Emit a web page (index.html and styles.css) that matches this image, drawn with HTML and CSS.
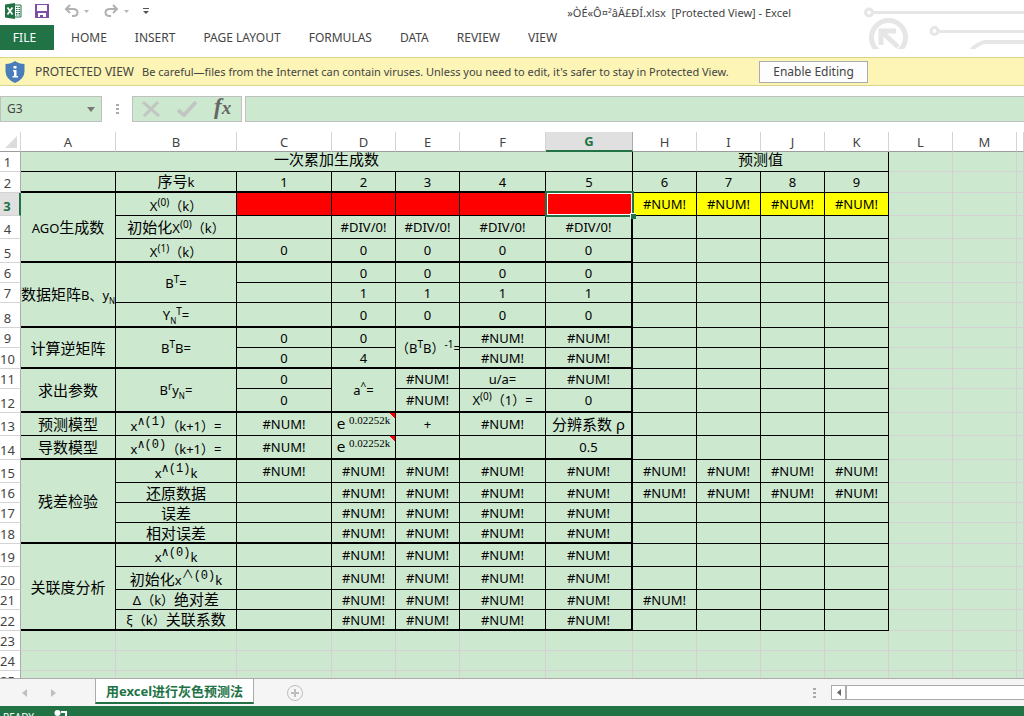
FILE: index.html
```html
<!DOCTYPE html>
<html lang="zh-CN">
<head>
<meta charset="utf-8">
<title>Excel</title>
<link rel="stylesheet" href="styles.css">
</head>
<body>
<div class="app">
  <header class="top">
    <svg class="circuit" width="160" height="49" viewBox="0 0 160 49" fill="none" stroke="#e6e6e6" stroke-width="3" aria-hidden="true">
      <circle cx="5" cy="12.500" r="3.500"/><path d="M9 12.500H160"/>
      <circle cx="70.500" cy="31" r="3.500"/><path d="M75 31.500H160"/>
      <path d="M107 50Q116 42 122 42H160" stroke-width="4"/>
      <circle cx="24.500" cy="37.500" r="17" stroke-width="5"/>
      <path d="M17 45V31H32M18 32L34 47" stroke-width="5"/>
    </svg>
    <div class="titlebar">
      <div class="quick">
        <svg width="18" height="16" viewBox="0 0 18 16"><path d="M9 2h7v12H9z" fill="#fff" stroke="#217346"/><path d="M11 4.500h4M11 6.500h4M11 8.500h4M11 10.500h4M11 12h4" stroke="#217346" stroke-dasharray="1.500 1"/><path d="M0 1.500L10 0v16L0 14.500z" fill="#217346"/><path d="M2.500 4.500l5 7M7.500 4.500l-5 7" stroke="#fff" stroke-width="1.700"/></svg>
        <button aria-label="Save" class="save"><svg width="14" height="14" viewBox="0 0 14 14"><path d="M0 0h14v14H0z" fill="#7f4fa8"/><path d="M2 1h10v6H2zM3 9h8v4H8v-2H5v2H3z" fill="#fff"/></svg></button>
        <button aria-label="Undo" class="undo"><svg width="15" height="14" viewBox="0 0 15 14" fill="none" stroke="#b1b1b1" stroke-width="2"><path d="M6 1L2 5l4 4M2 5h7c6 0 6 7 0 7H8"/></svg><svg width="5" height="3" viewBox="0 0 5 3"><path d="M0 0h5L2.500 3z" fill="#b5b5b5"/></svg></button>
        <button aria-label="Redo" class="redo"><svg width="15" height="14" viewBox="0 0 15 14" fill="none" stroke="#b1b1b1" stroke-width="2"><path d="M9 1l4 4-4 4M13 5H6c-6 0-6 7 0 7h1"/></svg><svg width="5" height="3" viewBox="0 0 5 3"><path d="M0 0h5L2.500 3z" fill="#b5b5b5"/></svg></button>
        <button aria-label="Customize" class="custom"><svg width="6" height="7" viewBox="0 0 6 7"><path d="M0 0h6v1H0zM0 3h6L3 6z" fill="#555"/></svg></button>
      </div>
      <div class="title">»ÒÉ«Ô¤²âÄ£ÐÍ.xlsx&nbsp; [Protected View] - Excel</div>
    </div>
    <nav class="tabs">
      <button class="file">FILE</button><button>HOME</button><button>INSERT</button><button>PAGE LAYOUT</button><button>FORMULAS</button><button>DATA</button><button>REVIEW</button><button>VIEW</button>
    </nav>
  </header>
  <div class="notice">
    <svg width="20" height="22" viewBox="0 0 20 22"><path d="M10 0q4 3 9.500 3v7q0 8-9.500 12Q.5 18 .5 10V3Q6 3 10 0z" fill="#4a7ebb"/><path d="M8.500 5h3v2.500h-3zM8 9h3.500v6H13v1.500H7.500V15H9v-4.500H8z" fill="#fff"/></svg>
    <span class="head">PROTECTED VIEW</span>
    <span class="msg">Be careful—files from the Internet can contain viruses. Unless you need to edit, it's safer to stay in Protected View.</span>
    <button>Enable Editing</button>
  </div>
  <div class="formula">
    <div class="namebox"><input aria-label="Name box" value="G3"><svg width="8" height="5" viewBox="0 0 8 5"><path d="M0 0h8L4 5z" fill="#777"/></svg></div>
    <span class="dots"></span>
    <div class="fxbox">
      <button aria-label="Cancel"><svg width="18" height="16" viewBox="0 0 18 16"><path d="M1 1l16 14M16 1L2 15" stroke="#c2c6c2" stroke-width="3"/></svg></button>
      <button aria-label="Enter"><svg width="20" height="16" viewBox="0 0 20 16"><path d="M1 9l6 5L19 1" fill="none" stroke="#c2c6c2" stroke-width="4"/></svg></button>
      <button aria-label="Insert function" class="fx">f<small>x</small></button>
    </div>
    <input class="bar" aria-label="Formula bar">
  </div>
  <main class="sheet">
  <table>
    <colgroup><col class="w-rh"><col class="w-a"><col class="w-b"><col class="w-a"><col class="w-d"><col class="w-d"><col class="w-f"><col class="w-g"><col class="w-d"><col class="w-d"><col class="w-d"><col class="w-d"><col class="w-d"><col class="w-d"><col></colgroup>
    <thead><tr class="cols"><th class="corner"><svg width="12" height="12" viewBox="0 0 12 12"><path d="M12 0v12H0z" fill="#dcdcdc"/></svg></th><th>A</th><th>B</th><th>C</th><th>D</th><th>E</th><th>F</th><th class="on">G</th><th>H</th><th>I</th><th>J</th><th>K</th><th>L</th><th>M</th><th></th></tr></thead>
    <tbody>
    <tr class="r20"><th>1</th><td colspan="7" class="zh tight">一次累加生成数</td><td colspan="4" class="zh tight">预测值</td><td class="o"></td><td class="o"></td><td class="o"></td></tr>
    <tr class="r21 t"><th>2</th><td></td><td><span class="zh">序号</span>k</td><td>1</td><td>2</td><td>3</td><td>4</td><td>5</td><td class="h">6</td><td class="h">7</td><td class="h">8</td><td class="h">9</td><td class="o"></td><td class="o"></td><td class="o"></td></tr>
    <tr class="r23"><th class="on">3</th><td rowspan="3" class="tb">AGO<span class="zh">生成数</span></td><td class="low">X<sup>(0)</sup>（k）</td><td class="red"></td><td class="red"></td><td class="red"></td><td class="red"></td><td class="red active"><div class="selection"><i></i></div></td><td class="yel">#NUM!</td><td class="yel">#NUM!</td><td class="yel">#NUM!</td><td class="yel">#NUM!</td><td class="o"></td><td class="o"></td><td class="o"></td></tr>
    <tr class="r23"><th>4</th><td><span class="zh">初始化</span>X<sup>(0)</sup>（k）</td><td></td><td>#DIV/0!</td><td>#DIV/0!</td><td>#DIV/0!</td><td class="g">#DIV/0!</td><td></td><td></td><td></td><td></td><td class="o"></td><td class="o"></td><td class="o"></td></tr>
    <tr class="r24 t"><th>5</th><td class="low">X<sup>(1)</sup>（k）</td><td>0</td><td>0</td><td>0</td><td>0</td><td class="g">0</td><td class="h"></td><td class="h"></td><td class="h"></td><td class="h"></td><td class="o"></td><td class="o"></td><td class="o"></td></tr>
    <tr class="r20"><th>6</th><td rowspan="3" class="tb clip"><span class="zh">数据矩阵</span>B、y<sub>N</sub></td><td rowspan="2">B<sup>T</sup>=</td><td></td><td>0</td><td>0</td><td>0</td><td class="g">0</td><td></td><td></td><td></td><td></td><td class="o"></td><td class="o"></td><td class="o"></td></tr>
    <tr class="r20"><th>7</th><td></td><td>1</td><td>1</td><td>1</td><td class="g">1</td><td></td><td></td><td></td><td></td><td class="o"></td><td class="o"></td><td class="o"></td></tr>
    <tr class="r25 t"><th>8</th><td>Y<sub>N</sub><sup>T</sup>=</td><td></td><td>0</td><td>0</td><td>0</td><td class="g">0</td><td class="h"></td><td class="h"></td><td class="h"></td><td class="h"></td><td class="o"></td><td class="o"></td><td class="o"></td></tr>
    <tr class="r20"><th>9</th><td rowspan="2" class="tb zh">计算逆矩阵</td><td rowspan="2" class="tb">B<sup>T</sup>B=</td><td>0</td><td>0</td><td rowspan="2" class="tb clip">（B<sup>T</sup>B）<sup>-1</sup>=</td><td>#NUM!</td><td class="g">#NUM!</td><td></td><td></td><td></td><td></td><td class="o"></td><td class="o"></td><td class="o"></td></tr>
    <tr class="r21 t"><th>10</th><td>0</td><td>4</td><td>#NUM!</td><td class="g">#NUM!</td><td class="h"></td><td class="h"></td><td class="h"></td><td class="h"></td><td class="o"></td><td class="o"></td><td class="o"></td></tr>
    <tr class="r20"><th>11</th><td rowspan="2" class="tb zh">求出参数</td><td rowspan="2" class="tb">B<sup>r</sup>y<sub>N</sub>=</td><td>0</td><td rowspan="2" class="tb">a<sup>^</sup>=</td><td>#NUM!</td><td>u/a=</td><td class="g">#NUM!</td><td></td><td></td><td></td><td></td><td class="o"></td><td class="o"></td><td class="o"></td></tr>
    <tr class="r24 t"><th>12</th><td>0</td><td>#NUM!</td><td>X<sup>(0)</sup>（1）=</td><td class="g">0</td><td class="h"></td><td class="h"></td><td class="h"></td><td class="h"></td><td class="o"></td><td class="o"></td><td class="o"></td></tr>
    <tr class="r23"><th>13</th><td class="zh">预测模型</td><td class="low">x<sup class="song">∧(1)</sup>（k+1）=</td><td>#NUM!</td><td class="note"><span class="e">e</span> <sup class="exp">0.02252k</sup></td><td>+</td><td>#NUM!</td><td class="g"><span class="zh">分辨系数</span><span class="rho">ρ</span></td><td></td><td></td><td></td><td></td><td class="o"></td><td class="o"></td><td class="o"></td></tr>
    <tr class="r24 t"><th>14</th><td class="zh">导数模型</td><td class="low">x<sup class="song">∧(0)</sup>（k+1）=</td><td>#NUM!</td><td class="note"><span class="e">e</span> <sup class="exp">0.02252k</sup></td><td></td><td></td><td class="g">0.5</td><td class="h"></td><td class="h"></td><td class="h"></td><td class="h"></td><td class="o"></td><td class="o"></td><td class="o"></td></tr>
    <tr class="r23"><th>15</th><td rowspan="4" class="tb zh">残差检验</td><td class="low">x<sup class="song">∧(1)</sup>k</td><td>#NUM!</td><td>#NUM!</td><td>#NUM!</td><td>#NUM!</td><td class="g">#NUM!</td><td>#NUM!</td><td>#NUM!</td><td>#NUM!</td><td>#NUM!</td><td class="o"></td><td class="o"></td><td class="o"></td></tr>
    <tr class="r20"><th>16</th><td class="zh">还原数据</td><td></td><td>#NUM!</td><td>#NUM!</td><td>#NUM!</td><td class="g">#NUM!</td><td>#NUM!</td><td>#NUM!</td><td>#NUM!</td><td>#NUM!</td><td class="o"></td><td class="o"></td><td class="o"></td></tr>
    <tr class="r20"><th>17</th><td class="zh">误差</td><td></td><td>#NUM!</td><td>#NUM!</td><td>#NUM!</td><td class="g">#NUM!</td><td></td><td></td><td></td><td></td><td class="o"></td><td class="o"></td><td class="o"></td></tr>
    <tr class="r21 t"><th>18</th><td class="zh">相对误差</td><td></td><td>#NUM!</td><td>#NUM!</td><td>#NUM!</td><td class="g">#NUM!</td><td class="h"></td><td class="h"></td><td class="h"></td><td class="h"></td><td class="o"></td><td class="o"></td><td class="o"></td></tr>
    <tr class="r23"><th>19</th><td rowspan="4" class="tb zh">关联度分析</td><td class="low">x<sup class="song">∧(0)</sup>k</td><td></td><td>#NUM!</td><td>#NUM!</td><td>#NUM!</td><td class="g">#NUM!</td><td></td><td></td><td></td><td></td><td class="o"></td><td class="o"></td><td class="o"></td></tr>
    <tr class="r23"><th>20</th><td class="low"><span class="zh">初始化</span>x<sup class="song"><span class="wide">∧</span>(0)</sup>k</td><td></td><td>#NUM!</td><td>#NUM!</td><td>#NUM!</td><td class="g">#NUM!</td><td></td><td></td><td></td><td></td><td class="o"></td><td class="o"></td><td class="o"></td></tr>
    <tr class="r20"><th>21</th><td>Δ（k）<span class="zh">绝对差</span></td><td></td><td>#NUM!</td><td>#NUM!</td><td>#NUM!</td><td class="g">#NUM!</td><td>#NUM!</td><td></td><td></td><td></td><td class="o"></td><td class="o"></td><td class="o"></td></tr>
    <tr class="r21 t"><th>22</th><td>ξ（k）<span class="zh">关联系数</span></td><td></td><td>#NUM!</td><td>#NUM!</td><td>#NUM!</td><td class="g">#NUM!</td><td class="h"></td><td class="h"></td><td class="h"></td><td class="h"></td><td class="o"></td><td class="o"></td><td class="o"></td></tr>
    <tr class="r20 blank"><th>23</th><td></td><td></td><td></td><td></td><td></td><td></td><td></td><td></td><td></td><td></td><td></td><td></td><td></td><td></td></tr>
    <tr class="r20 blank"><th>24</th><td></td><td></td><td></td><td></td><td></td><td></td><td></td><td></td><td></td><td></td><td></td><td></td><td></td><td></td></tr>
    <tr class="r20 blank"><th>25</th><td></td><td></td><td></td><td></td><td></td><td></td><td></td><td></td><td></td><td></td><td></td><td></td><td></td><td></td></tr>
    </tbody>
  </table>
  </main>
  <div class="sheetbar">
    <div class="arrows"><button aria-label="Previous sheet"><svg width="5" height="8" viewBox="0 0 5 8"><path d="M5 0v8L0 4z" fill="#c0c0c0"/></svg></button><button aria-label="Next sheet"><svg width="5" height="8" viewBox="0 0 5 8"><path d="M0 0v8l5-4z" fill="#c0c0c0"/></svg></button></div>
    <button class="sheettab">用excel进行灰色预测法</button>
    <button class="add" aria-label="New sheet"><svg width="16" height="16" viewBox="0 0 16 16" fill="none" stroke="#bdbdbd"><circle cx="8" cy="8" r="7.500"/><path d="M8 4v8M4 8h8" stroke-width="2"/></svg></button>
    <span class="dots"></span>
    <div class="scroll"><button aria-label="Scroll left"><svg width="4" height="7" viewBox="0 0 4 7"><path d="M4 0v7L0 3.500z" fill="#666"/></svg></button></div>
  </div>
  <footer class="status"><span>READY</span><svg width="14" height="12" viewBox="0 0 14 12" fill="#fff"><circle cx="3.500" cy="3" r="3"/><path d="M7 1h6v5h-2V3H7zM1 7h12v5H1z"/></svg></footer>
</div>
</body>
</html>
```
FILE: styles.css
```css
* { box-sizing: border-box; }
body {
  margin: 0;
  overflow: hidden;
  font: 12px/18px "Noto Sans", "Noto Sans CJK SC", sans-serif;
  color: #444;
  background: #fff;
}
button, input { font: inherit; color: inherit; border: 0; padding: 0; margin: 0; background: none; }
svg { display: block; flex: none; }
.app { display: flex; flex-direction: column; height: calc(100vh + 12px); }

.top { position: relative; flex: none; }
.circuit { position: absolute; top: 0; right: 0; }
.titlebar { display: flex; justify-content: space-between; height: 25px; padding-right: 233px; }
.quick { display: flex; align-items: center; height: 22px; padding-left: 5px; }
.quick button { display: flex; align-items: center; gap: 5px; }
.save { margin-left: 12px; }
.undo { margin-left: 15px; }
.redo { margin-left: 15px; }
.custom { margin-left: 14px; }
.title { position: relative; padding-top: 4px; font-size: 11px; white-space: nowrap; }
.tabs { position: relative; display: flex; height: 25px; gap: 28px; }
.tabs .file { width: 54px; margin-right: -11px; padding-right: 5px; color: #fff; background: #217346; }

.notice {
  flex: none;
  display: flex;
  align-items: center;
  height: 29px;
  margin-top: 7px;
  padding-left: 5px;
  white-space: nowrap;
  background: #fcf5b5;
  border: solid #d8d48c;
  border-width: 1px 0;
}
.head { margin-left: 10px; }
.msg { min-width: 596px; margin-left: 8px; font-size: 11px; }
.notice button { width: 109px; height: 22px; margin-left: 21px; background: #fdfdfd; border: 1px solid #ababab; }

.formula { flex: none; display: flex; height: 26px; margin: 10px 0; }
.namebox, .fxbox, .bar { background: #cce8cf; border: 1px solid #c0c0c0; }
.namebox { display: flex; align-items: center; width: 102px; padding: 0 6px; }
.namebox input { flex: 1; min-width: 0; }
.dots { width: 3px; height: 10px; background: repeating-linear-gradient(#aaa 0 2px, transparent 2px 4px); }
.formula .dots { margin: 8px 13px 8px 14px; }
.fxbox { display: flex; align-items: center; width: 110px; padding-left: 9px; gap: 17px; }
.fxbox .fx { padding-bottom: 4px; font: italic bold 23px/20px "Liberation Serif", serif; color: #666; }
.fx small { font-size: 19px; }
.bar { flex: 1; min-width: 0; margin-left: 3px; border-right: 0; }

.sheet { flex: 1; min-height: 0; overflow: hidden; background: #cce8cf; }
table { width: 100%; table-layout: fixed; border-collapse: separate; border-spacing: 0; }
.w-rh { width: 21px; }
.w-a { width: 95px; }
.w-b { width: 121px; }
.w-d { width: 64px; }
.w-f { width: 86px; }
.w-g { width: 87px; }
.cols { height: 20px; }
.r20 { height: 20px; }
.r21 { height: 21px; }
.r23 { height: 23px; }
.r24 { height: 24px; }
.r25 { height: 25px; }
th, td { padding: 0; font-size: 13px; font-weight: normal; line-height: 18px; white-space: nowrap; }
th { color: #444; background: #fff; }
.cols th {
  border: solid #9c9c9c;
  border-width: 0 1px 1px 0;
  border-right-color: #d4d4d4;
}
.cols .corner { padding-left: 5px; }
.cols .on { font-weight: bold; color: #217346; background: #e0e0e0; border-right-color: #ababab; border-bottom: 2px solid #217346; }
tbody th {
  padding-right: 5px;
  vertical-align: bottom;
  border: solid #d4d4d4;
  border-width: 0 1px 1px 0;
  border-right-color: #ababab;
}
tbody th.on { font-weight: bold; color: #217346; background: #e0e0e0; border-right: 2px solid #217346; }
td { text-align: center; color: #000; border: solid #000; border-width: 0 1px 1px 0; }
.t td, td.tb { border-bottom-width: 2px; }
td.g { border-right-width: 2px; }
.t td.h { border-bottom-width: 1px; }
td.o, .t td.o, .blank td { border-bottom-width: 1px; border-color: #d4d0d4; }
.zh { font-size: 15px; }
td.tight { line-height: 14px; vertical-align: top; }
td.red { background: #f00; }
td.yel { background: #ff0; }
td.clip { overflow: hidden; }
td.low { vertical-align: bottom; }
sup, sub { line-height: 0; }
sup { font-size: 10px; }
sub { font-size: 8px; }
.song { font-family: "Liberation Mono", monospace; font-size: 12px; vertical-align: 6px; }
.song .wide { font-family: "Noto Sans CJK SC", sans-serif; }
.exp { font-family: "Liberation Serif", serif; font-size: 11px; }
.e { font-family: "DejaVu Sans", sans-serif; font-size: 14px; }
.rho { margin-left: 4px; font-size: 15px; }
td.note { background: linear-gradient(225deg, #f00 4px, transparent 4px); }
td.active { position: relative; }
.selection { position: absolute; inset: -2px -2px -2px -1px; border: 2px solid #217346; box-shadow: inset 0 0 0 1px #fff; }
.selection i { position: absolute; right: -4px; bottom: -4px; width: 6px; height: 6px; background: #217346; border: solid #fff; border-width: 1px 0 0 1px; }

.sheetbar { flex: none; display: flex; align-items: center; height: 28px; background: #f5f5f5; border-top: 1px solid #ababab; }
.arrows { display: flex; gap: 24px; width: 95px; padding-left: 22px; }
.sheettab {
  align-self: flex-start;
  width: 159px;
  height: 25px;
  font-size: 13px;
  font-weight: bold;
  white-space: nowrap;
  color: #217346;
  background: #fff;
  border: solid #ababab;
  border-width: 0 1px 2px;
  border-bottom-color: #217346;
}
.add { margin-left: 33px; }
.sheetbar .dots { margin-left: auto; }
.scroll { display: flex; width: 193px; height: 15px; margin-left: 15px; background: #fff; border: 1px solid #ababab; border-right: 0; }
.scroll button { width: 15px; padding-left: 5px; border-right: 2px solid #ababab; }
.status { flex: none; display: flex; gap: 20px; height: 22px; padding: 4px 3px; font-size: 10px; line-height: 14px; color: #fff; background: #217346; }
```
